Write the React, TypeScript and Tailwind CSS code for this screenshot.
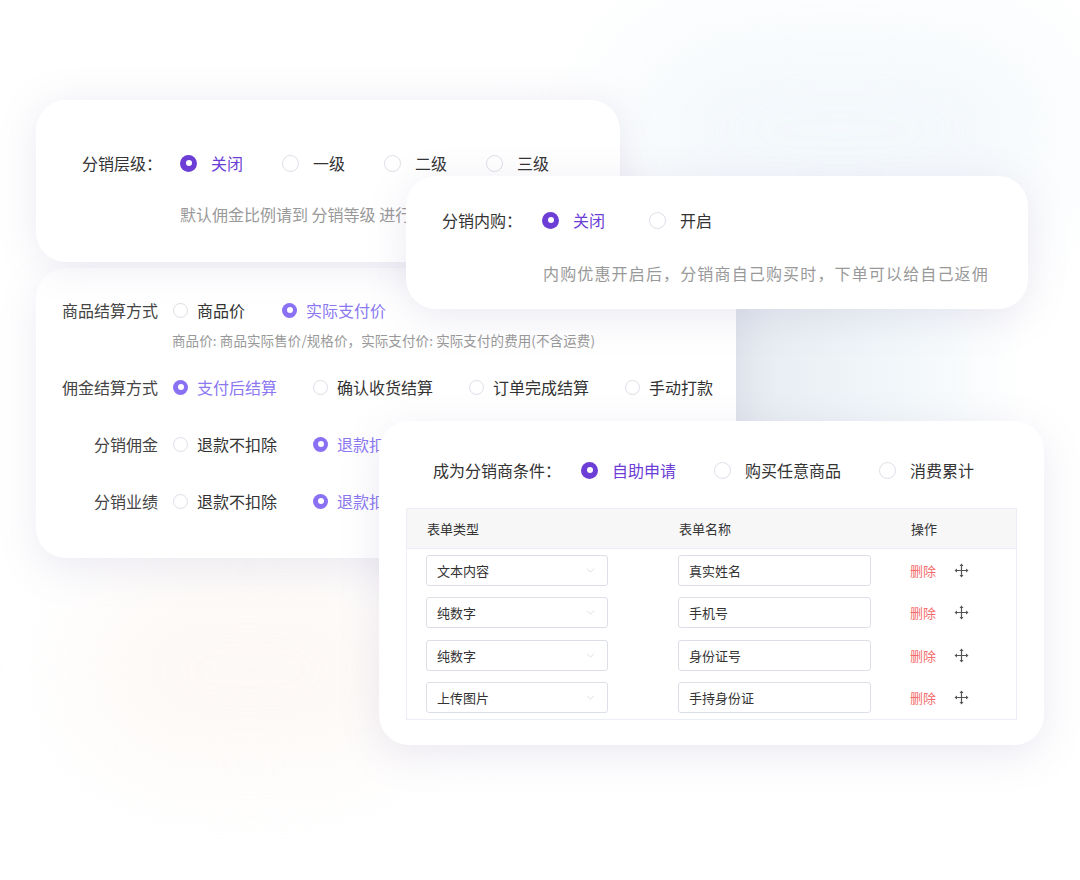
import React from "react";
import { ChevronDown } from "lucide-react";

const FONT = { fontFamily: '"Noto Sans CJK SC", "Noto Sans", sans-serif' };

interface IRadioProps {
	label: string;
	checked?: boolean;
	light?: boolean;
	small?: boolean;
}

const Radio: React.FC<IRadioProps> = ({ label, checked, light, small }) => {
	const size = small ? "w-[15px] h-[15px]" : "w-[17px] h-[17px]";
	const fill = light ? "bg-[#8a70f2]" : "bg-[#6c3ed6]";
	const text = light ? "text-[#8b78f2]" : "text-[#6c3ed6]";
	return (
		<div className="flex items-center">
			{checked ? (
				<span className={`${size} ${fill} rounded-full flex items-center justify-center shrink-0`}>
					<span className="w-[6px] h-[6px] rounded-full bg-white" />
				</span>
			) : (
				<span className={`${size} rounded-full border border-[#dcdfe6] bg-white shrink-0`} />
			)}
			<span className={`${small ? "ml-[9px]" : "ml-[14px]"} whitespace-nowrap ${checked ? text : "text-[#333]"}`}>
				{label}
			</span>
		</div>
	);
};

const Row3: React.FC<{ label: string; children: React.ReactNode; className?: string }> = ({
	label,
	children,
	className,
}) => (
	<div className={`flex items-center ${className ?? ""}`}>
		<span className="w-[96px] text-right text-[#444] whitespace-nowrap">{label}</span>
		<div className="ml-[15px] flex items-center gap-[36px]">{children}</div>
	</div>
);

// four-way drag handle with small solid arrow heads
const DragIcon = () => (
	<svg width="15" height="15" viewBox="0 0 15 15" className="ml-[18px]">
		<path d="M7.5 2.5v10M2.5 7.5h10" stroke="#555" strokeWidth="1.2" />
		<path d="M7.5 0.5l2 2.5h-4zM7.5 14.5l2-2.5h-4zM0.5 7.5l2.5-2v4zM14.5 7.5l-2.5-2v4z" fill="#555" />
	</svg>
);

const formRows = [
	{ type: "文本内容", name: "真实姓名" },
	{ type: "纯数字", name: "手机号" },
	{ type: "纯数字", name: "身份证号" },
	{ type: "上传图片", name: "手持身份证" },
];

export default function App() {
	return (
		<div className="relative w-[1080px] h-[880px] overflow-hidden bg-white" style={FONT}>
			{/* background haze */}
			<div className="absolute left-[620px] top-[30px] w-[440px] h-[200px] rounded-full bg-[#eef5fa] blur-[60px] opacity-70" />
			<div className="absolute left-[80px] top-[570px] w-[340px] h-[200px] rounded-full bg-[#fcf6f2] blur-[50px] opacity-70" />
			<div className="absolute left-[736px] top-[308px] w-[290px] h-[115px] bg-gradient-to-r from-[#e6ebf1] via-[#f0f6f9] to-transparent" />

			{/* card 3: settlement */}
			<div className="absolute left-[36px] top-[268px] w-[700px] h-[290px] rounded-[30px] bg-white shadow-[0_12px_40px_rgba(130,120,170,0.14)] pl-[26px] text-[16px]">
				<Row3 label="商品结算方式" className="mt-[30px]">
					<div className="flex items-center gap-[37px]">
						<Radio small label="商品价" />
						<Radio small light checked label="实际支付价" />
					</div>
				</Row3>
				<div className="ml-[110px] mt-[8px] text-[13.5px] tracking-[0.1px] text-[#999] whitespace-nowrap">
					商品价: 商品实际售价/规格价，实际支付价: 实际支付的费用(不含运费)
				</div>
				<Row3 label="佣金结算方式" className="mt-[25px]">
					<Radio small light checked label="支付后结算" />
					<Radio small label="确认收货结算" />
					<Radio small label="订单完成结算" />
					<Radio small label="手动打款" />
				</Row3>
				<Row3 label="分销佣金" className="mt-[33px]">
					<Radio small label="退款不扣除" />
					<Radio small light checked label="退款扣除" />
				</Row3>
				<Row3 label="分销业绩" className="mt-[33px]">
					<Radio small label="退款不扣除" />
					<Radio small light checked label="退款扣除" />
				</Row3>
			</div>

			{/* card 1: levels */}
			<div className="absolute left-[36px] top-[100px] w-[584px] h-[162px] rounded-[30px] bg-white shadow-[0_4px_40px_rgba(130,120,170,0.16)] pl-[46px] text-[16px]">
				<div className="flex items-center mt-[51px]">
					<span className="text-[#333] w-[98px]">分销层级：</span>
					<div className="flex items-center gap-[39px]">
						<Radio checked label="关闭" />
						<Radio label="一级" />
						<Radio label="二级" />
						<Radio label="三级" />
					</div>
				</div>
				<div className="ml-[98px] mt-[27px] text-[#999] whitespace-nowrap">默认佣金比例请到 分销等级 进行设置</div>
			</div>

			{/* card 2: self purchase */}
			<div className="absolute left-[406px] top-[176px] w-[622px] h-[133px] rounded-[30px] bg-white shadow-[0_8px_40px_rgba(130,120,170,0.16)] pl-[36px] text-[16px]">
				<div className="flex items-center mt-[32px]">
					<span className="text-[#333] w-[100px]">分销内购：</span>
					<div className="flex items-center gap-[44px]">
						<Radio checked label="关闭" />
						<Radio label="开启" />
					</div>
				</div>
				<div className="ml-[101px] mt-[29px] text-[#999] tracking-[1.15px] whitespace-nowrap">
					内购优惠开启后，分销商自己购买时，下单可以给自己返佣
				</div>
			</div>

			{/* card 4: conditions + form */}
			<div className="absolute left-[379px] top-[421px] w-[665px] h-[324px] rounded-[30px] bg-white shadow-[0_10px_40px_rgba(130,120,170,0.16)] px-[27px] text-[16px]">
				<div className="flex items-center mt-[37px] pl-[27px]">
					<span className="text-[#333] w-[148px] whitespace-nowrap">成为分销商条件：</span>
					<div className="flex items-center gap-[38px]">
						<Radio checked label="自助申请" />
						<Radio label="购买任意商品" />
						<Radio label="消费累计" />
					</div>
				</div>

				<div className="mt-[26px] border border-[#ebeef5] text-[13px] text-[#333]">
					<div className="flex items-center h-[40px] bg-[#f7f7f8] border-b border-[#ebeef5] pl-[20px]">
						<span className="w-[252px]">表单类型</span>
						<span className="w-[232px]">表单名称</span>
						<span>操作</span>
					</div>
					<div>
						{formRows.map((r, i) => (
							<div key={i} className="flex items-center py-[5.75px] pl-[19px]">
								<div className="w-[182px] h-[31px] border border-[#dcdfe6] rounded-[3px] flex items-center justify-between pl-[10px] pr-[10px]">
									<span>{r.type}</span>
									<ChevronDown size={13} strokeWidth={1} color="#c0c4cc" />
								</div>
								<div className="ml-[70px] w-[193px] h-[31px] border border-[#dcdfe6] rounded-[3px] flex items-center pl-[10px]">
									{r.name}
								</div>
								<span className="ml-[39px] text-[#f56c6c]">删除</span>
								<DragIcon />
							</div>
						))}
					</div>
				</div>
			</div>
		</div>
	);
}
